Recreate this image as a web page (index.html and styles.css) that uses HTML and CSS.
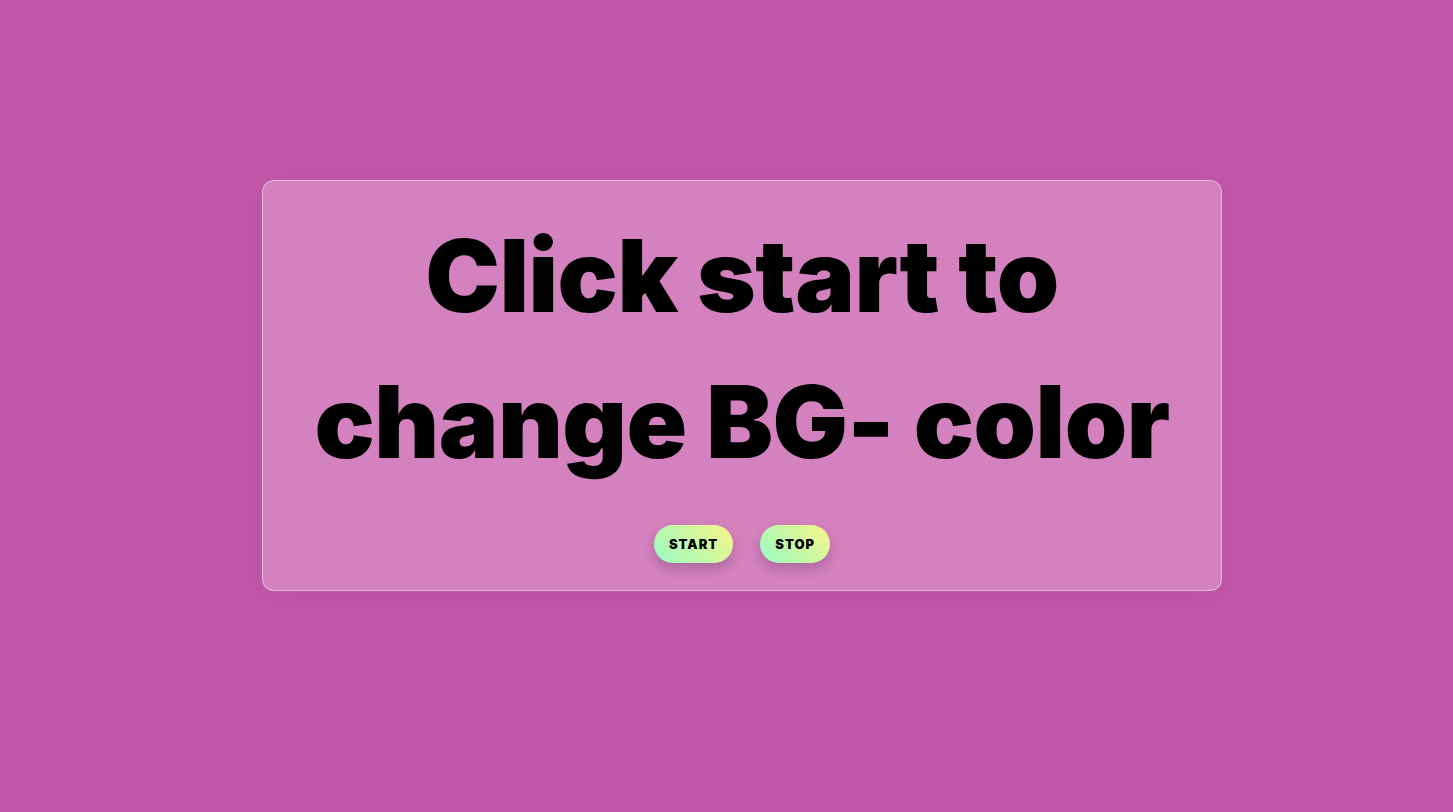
FILE: index.html
```html
<!DOCTYPE html>
<html lang="en">
<head>
<meta charset="utf-8">
<title>BG Color Changer</title>
<link rel="stylesheet" href="styles.css">
</head>
<body>
<main class="page">
  <section class="card">
    <h1 class="title">Click start to change BG- color</h1>
    <div class="actions">
      <button class="btn">START</button>
      <button class="btn">STOP</button>
    </div>
  </section>
</main>
</body>
</html>
```
FILE: styles.css
```css
* { box-sizing: border-box; }
html, body { margin: 0; padding: 0; }
body {
  background: #c457aa;
  font-family: Inter, "Noto Sans", sans-serif;
  min-height: 812px;
}
.page {
  display: flex;
  justify-content: center;
  padding-top: 180px;
  padding-left: 31px;
}
.card {
  width: 960px;
  height: 411px;
  background: rgba(255, 255, 255, 0.25);
  border: 1px solid rgba(255, 255, 255, 0.45);
  border-radius: 12px;
  box-shadow: 0 4px 30px rgba(0, 0, 0, 0.08);
  display: flex;
  flex-direction: column;
  align-items: center;
  padding: 22px 40px 0;
}
.title {
  margin: 0;
  font-size: 100px;
  font-weight: 900;
  line-height: 146px;
  text-align: center;
  color: #000;
  letter-spacing: -0.5px;
  max-width: 880px;
}
.actions {
  display: flex;
  gap: 27px;
  margin-top: 30px;
}
.btn {
  border: none;
  border-radius: 20px;
  height: 38px;
  padding: 0 15px;
  font-family: Inter, sans-serif;
  font-weight: 900;
  font-size: 13px;
  letter-spacing: 1px;
  color: #000;
  background: linear-gradient(45deg, #96fbc4 0%, #f9f586 100%);
  box-shadow: 0 6px 12px rgba(0, 0, 0, 0.18);
  cursor: pointer;
}
```
